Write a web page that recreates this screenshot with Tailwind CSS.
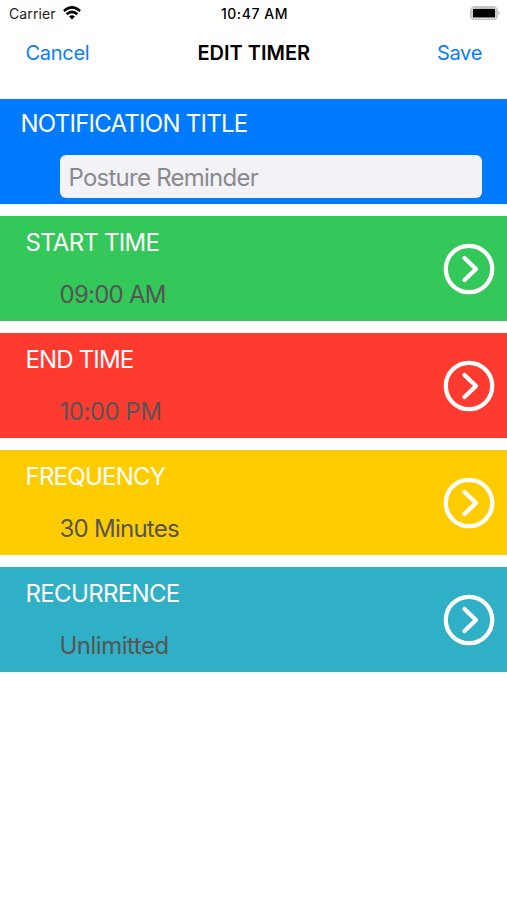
<!DOCTYPE html>
<html lang="en"><head><meta charset="utf-8"><title>Edit Timer</title>
<script src="https://cdn.jsdelivr.net/npm/@tailwindcss/browser@4"></script></head>
<body class="bg-white font-['Inter',sans-serif]">
<div class="w-[507px] h-[900px] overflow-hidden flex flex-col">
<header class="grid grid-cols-3 items-center h-[27px] pl-[9px] pr-[7px] text-[14px] text-black">
<div class="flex items-center gap-[7px]"><span class="text-[#222] tracking-[0.1px]">Carrier</span>
<svg class="-mt-[2px]" width="18" height="14" viewBox="0 0 18 14" fill="none" stroke="#000" stroke-width="2.5"><path d="M.9 5Q9-2.2 17.1 5M3.6 8.2Q9 3.6 14.4 8.2"/><path d="M6 10.5Q9 8.1 12 10.5L9 13.5Z" fill="#000" stroke="none"/></svg></div>
<div class="text-center font-medium tracking-[0.55px]">10:47 AM</div>
<div class="flex justify-end"><svg class="-mt-[1px]" width="30" height="14" viewBox="0 0 30 14"><rect x="1" y="1" width="26" height="12.4" rx="3.6" fill="none" stroke="#c2c2c2" stroke-width="1.8"/><rect x="2.8" y="2.8" width="22.4" height="8.8" rx="1.2"/><path d="M28.5 4.8q3 2.3 0 4.6z" fill="#c2c2c2"/></svg></div>
</header>
<nav class="grid grid-cols-3 items-center h-[50px] pt-[1px] pl-[25.5px] pr-[25px] text-[20px] text-[#087eff]">
<span class="tracking-[-0.3px]">Cancel</span><span class="text-center text-black font-semibold whitespace-nowrap">EDIT TIMER</span><span class="text-right tracking-[-0.3px]">Save</span></nav>
<main class="flex flex-col gap-[12.2px] pt-[21.7px] text-[24px] text-white tracking-[-0.75px]">
<section class="h-[105px] bg-[#007aff] pt-[9.3px]"><h2 class="ml-[20.5px] leading-[31px]">NOTIFICATION TITLE</h2>
<div class="ml-[60px] mt-[16.5px] w-[422px] h-[43px] rounded-[6px] bg-[#f2f2f7] text-[#8a8a8e] pl-[8.5px] leading-[46px]">Posture Reminder</div></section>
<section class="flex items-center justify-between h-[105px] bg-[#34c759] pl-[25.5px] pr-[12px]"><div class="pt-[2px]"><h2 class="leading-[30px]">START TIME</h2><p class="pl-[34px] mt-[22px] leading-[30px] text-[#555]">09:00 AM</p></div><svg class="mt-[1px]" width="52" height="52" viewBox="0 0 52 52" fill="none" stroke="#fff" stroke-width="4.3" stroke-linecap="round" stroke-linejoin="round"><circle cx="26" cy="26" r="23.2"/><path d="M21.5 15L33 26L21.5 37"/></svg></section>
<section class="flex items-center justify-between h-[105px] bg-[#ff3b30] pl-[25.5px] pr-[12px]"><div class="pt-[1px]"><h2 class="leading-[30px] tracking-[-0.85px]">END TIME</h2><p class="pl-[34px] mt-[22px] leading-[30px] tracking-[-0.5px] text-[#555]">10:00 PM</p></div><svg width="52" height="52" viewBox="0 0 52 52" fill="none" stroke="#fff" stroke-width="4.3" stroke-linecap="round" stroke-linejoin="round"><circle cx="26" cy="26" r="23.2"/><path d="M21.5 15L33 26L21.5 37"/></svg></section>
<section class="flex items-center justify-between h-[105px] bg-[#ffcc00] pl-[25.5px] pr-[12px]"><div class="pt-[1px]"><h2 class="leading-[30px]">FREQUENCY</h2><p class="pl-[34px] mt-[22px] leading-[30px] text-[#555]">30 Minutes</p></div><svg width="52" height="52" viewBox="0 0 52 52" fill="none" stroke="#fff" stroke-width="4.3" stroke-linecap="round" stroke-linejoin="round"><circle cx="26" cy="26" r="23.2"/><path d="M21.5 15L33 26L21.5 37"/></svg></section>
<section class="flex items-center justify-between h-[105px] bg-[#30b0c7] pl-[25.5px] pr-[12px]"><div class="pt-[1px]"><h2 class="leading-[30px] tracking-[-0.65px]">RECURRENCE</h2><p class="pl-[34px] mt-[22px] leading-[30px] tracking-[-0.5px] text-[#555]">Unlimitted</p></div><svg width="52" height="52" viewBox="0 0 52 52" fill="none" stroke="#fff" stroke-width="4.3" stroke-linecap="round" stroke-linejoin="round"><circle cx="26" cy="26" r="23.2"/><path d="M21.5 15L33 26L21.5 37"/></svg></section>
</main></div></body></html>
